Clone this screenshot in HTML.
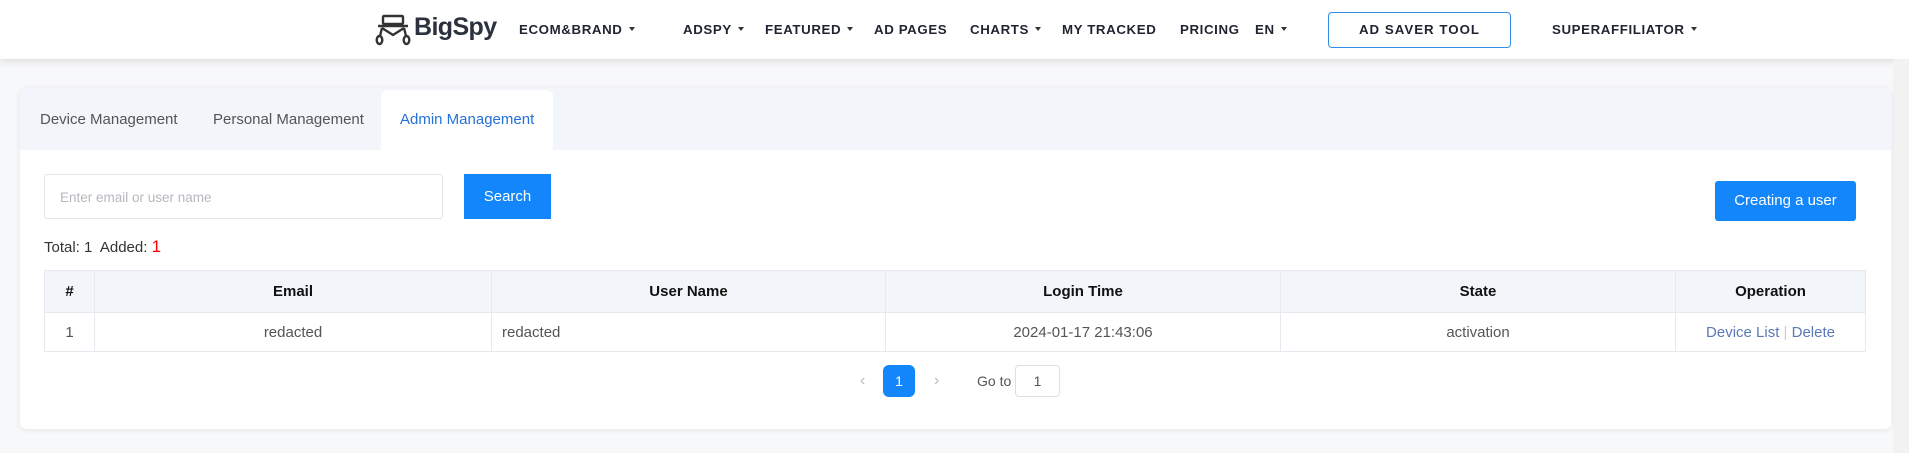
<!DOCTYPE html>
<html><head><meta charset="utf-8"><style>
*{margin:0;padding:0;box-sizing:border-box}
body{width:1909px;height:453px;background:#f7f8fa;font-family:"Liberation Sans",sans-serif;position:relative;overflow:hidden;color:#333}
.a{position:absolute;white-space:nowrap}
#hdr{left:0;top:0;width:1909px;height:59px;background:#fff;box-shadow:0 2px 8px rgba(0,0,0,.12)}
.nav{top:22px;font-size:13.3px;font-weight:bold;letter-spacing:.6px;color:#1f2430}
.car{display:inline-block;border-left:3.5px solid transparent;border-right:3.5px solid transparent;border-top:4px solid #333;vertical-align:middle;margin-left:6px;margin-top:-3px}
#card{left:20px;top:88px;width:1871px;height:341px;background:#fff;border-radius:6px;box-shadow:0 1px 6px rgba(0,0,0,.08);overflow:hidden}
#tabs{left:0;top:0;width:1871px;height:62px;background:#f2f5f9}
.tab{top:23px;font-size:15px;color:#555}
table{position:absolute;left:24px;top:182px;border-collapse:collapse;font-size:15px}
td,th{border:1px solid #e6e9f0;text-align:center;color:#555;font-weight:normal}
th{background:#f2f5f9;color:#111;font-weight:bold;height:42px}
td{height:39px}
</style></head><body>
<div class="a" id="hdr"></div>
<svg class="a" style="left:375px;top:14px" width="36" height="32" viewBox="0 0 36 32" fill="none" stroke="#333" stroke-width="2.4">
<rect x="8" y="2" width="20" height="8" rx="1"/><line x1="3" y1="12" x2="33" y2="12"/>
<path d="M7 14 L18 21 L29 14"/><path d="M7 14 L5 22"/><path d="M29 14 L31 22"/>
<ellipse cx="4.5" cy="26" rx="2.8" ry="4"/><ellipse cx="31.5" cy="26" rx="2.8" ry="4"/>
</svg>
<div class="a" style="left:414px;top:13px;font-size:25px;font-weight:bold;color:#2b323d;letter-spacing:-.6px">BigSpy</div>
<div class="a nav" style="left:519px">ECOM&amp;BRAND<span class="car"></span></div>
<div class="a nav" style="left:683px">ADSPY<span class="car"></span></div>
<div class="a nav" style="left:765px">FEATURED<span class="car"></span></div>
<div class="a nav" style="left:874px">AD PAGES</div>
<div class="a nav" style="left:970px">CHARTS<span class="car"></span></div>
<div class="a nav" style="left:1062px">MY TRACKED</div>
<div class="a nav" style="left:1180px">PRICING</div>
<div class="a nav" style="left:1255px">EN<span class="car"></span></div>
<div class="a" style="left:1328px;top:12px;width:183px;height:36px;border:1.5px solid #2f8fe8;border-radius:4px;text-align:center;line-height:33px;font-size:13.3px;font-weight:bold;letter-spacing:1px;color:#1f2430">AD SAVER TOOL</div>
<div class="a nav" style="left:1552px">SUPERAFFILIATOR<span class="car"></span></div>
<div class="a" style="left:1893px;top:59px;width:16px;height:394px;background:#f2f2f2"></div>

<div class="a" id="card">
 <div class="a" id="tabs"></div>
 <div class="a" style="left:361px;top:2px;width:172px;height:60px;background:#fff;border-radius:6px 6px 0 0"></div>
 <div class="a tab" style="left:20px">Device Management</div>
 <div class="a tab" style="left:193px">Personal Management</div>
 <div class="a tab" style="left:380px;color:#2470d8">Admin Management</div>
 <div class="a" style="left:24px;top:86px;width:399px;height:45px;border:1px solid #e3e5ea;border-radius:3px;font-size:13.5px;color:#b5b8bf;padding:15px 0 0 15px">Enter email or user name</div>
 <div class="a" style="left:444px;top:86px;width:87px;height:45px;background:#1286fa;color:#fff;font-size:15px;text-align:center;line-height:46px">Search</div>
 <div class="a" style="left:1695px;top:93px;width:141px;height:40px;background:#1286fa;color:#fff;font-size:15px;text-align:center;line-height:40px;border-radius:3px">Creating a user</div>
 <div class="a" style="left:24px;top:149px;font-size:15px;color:#333">Total: 1&nbsp; Added: <span style="color:#f00;font-size:17px">1</span></div>
 <table>
  <tr><th style="width:50px">#</th><th style="width:397px">Email</th><th style="width:394px">User Name</th><th style="width:395px">Login Time</th><th style="width:395px">State</th><th style="width:190px">Operation</th></tr>
  <tr><td>1</td><td>redacted</td><td style="text-align:left;padding-left:10px">redacted</td><td>2024-01-17 21:43:06</td><td>activation</td><td style="color:#5b79b8">Device List <span style="color:#ccc">|</span> Delete</td></tr>
 </table>
 <div class="a" style="left:840px;top:284px;font-size:16px;color:#bbb">‹</div>
 <div class="a" style="left:863px;top:277px;width:32px;height:32px;background:#1286fa;border-radius:6px;color:#fff;text-align:center;line-height:32px;font-size:14px">1</div>
 <div class="a" style="left:914px;top:284px;font-size:16px;color:#bbb">›</div>
 <div class="a" style="left:957px;top:285px;font-size:14px;color:#555">Go to</div>
 <div class="a" style="left:995px;top:277px;width:45px;height:32px;border:1px solid #dcdfe6;border-radius:4px;text-align:center;line-height:30px;font-size:14px;color:#555">1</div>
</div>
</body></html>
